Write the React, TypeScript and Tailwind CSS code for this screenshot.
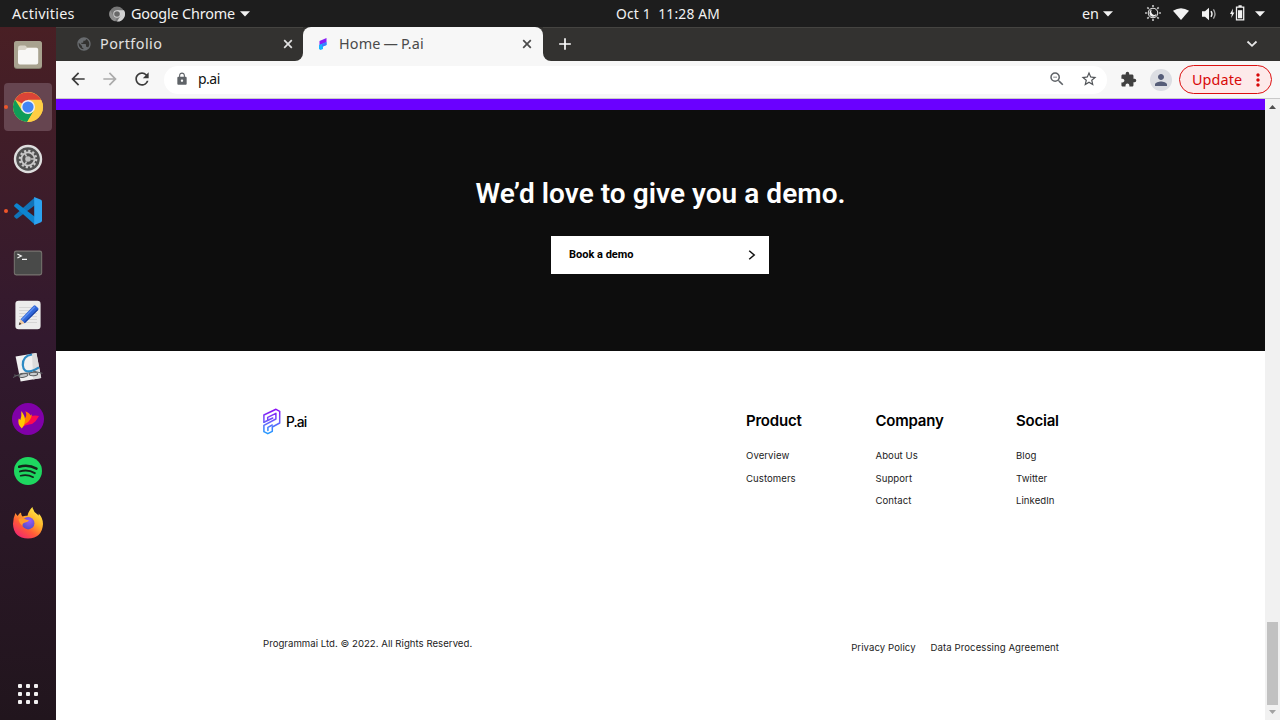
import type { ReactNode } from "react";
import {
  MdArrowBack,
  MdArrowForward,
  MdRefresh,
  MdLock,
  MdZoomOut,
  MdStarBorder,
  MdExtension,
  MdPerson,
  MdMoreVert,
  MdPublic,
  MdAdd,
} from "react-icons/md";

const UI = "font-['Noto_Sans','Open_Sans',sans-serif]";
const SITE = "font-[Inter,'Liberation_Sans',sans-serif]";
const DISPLAY = "font-[Roboto,'Liberation_Sans',sans-serif]";

function Caret({ className = "" }: { className?: string }) {
  return (
    <svg viewBox="0 0 10 6" className={`h-[6px] w-[10px] ${className}`}>
      <path d="M0 0.3h10L5 5.6z" fill="#f2f2f2" />
    </svg>
  );
}

function CloseIcon() {
  return (
    <svg viewBox="0 0 10 10" className="ml-auto h-[10px] w-[10px]">
      <path d="m1.2 1.2 7.6 7.6M8.8 1.2 1.2 8.8" stroke="currentColor" strokeWidth="1.7" />
    </svg>
  );
}

function SystemBar() {
  return (
    <header className={`flex h-[27px] shrink-0 items-center bg-[#1d1d1d] text-[14.4px] leading-none text-[#f2f2f2] ${UI}`}>
      <span className="w-[109px] pl-3 pt-px tracking-[0.28px]">Activities</span>
      <svg viewBox="0 0 16 16" className="h-4 w-4">
        <circle cx="8" cy="8" r="7.6" fill="#777" />
        <path d="M8 4.2h7A7.6 7.6 0 0 1 8 15.6L11.4 10z" fill="#d0d0d0" />
        <path d="M1.2 4.2 4.6 10A3.8 3.8 0 0 0 8 11.8L6 15.3A7.6 7.6 0 0 1 1.2 4.2z" fill="#8d8d8d" />
        <circle cx="8" cy="8" r="3.7" fill="#d5d5d5" />
        <circle cx="8" cy="8" r="2.8" fill="#686868" />
      </svg>
      <span className="w-[115px] whitespace-nowrap pl-[6px] pt-px tracking-[-0.18px]">Google Chrome</span>
      <Caret />
      <span className="w-[480px] whitespace-nowrap pl-[366px] text-[13.8px] tracking-[0.18px]">Oct 1&nbsp; 11:28 AM</span>
      <span className="ml-auto w-[21px] pt-px">en</span>
      <Caret />
      <svg viewBox="0 0 16 16" className="mb-[2px] ml-8 h-4 w-4">
        <path
          d="M8 0v2M8 14v2M0 8h2M14 8h2M2.3 2.3l1.5 1.5M12.2 12.2l1.5 1.5M2.3 13.7l1.5-1.5M12.2 3.8l1.5-1.5"
          stroke="#bcbcbc"
          strokeWidth="1.7"
        />
        <circle cx="8" cy="8" r="4.8" fill="none" stroke="#f2f2f2" strokeWidth="1" />
        <path d="M7.2 4.600A3.600 3.600 0 1 0 11.600 8.800 2.900 2.900 0 0 1 7.200 4.600z" fill="#f2f2f2" />
      </svg>
      <svg viewBox="0 0 16 12" className="ml-3 h-3 w-4">
        <path d="M0 2.8Q8-2.4 16 2.8L8 12z" fill="#f2f2f2" />
      </svg>
      <svg viewBox="0 0 16 14" className="ml-[13px] h-[14px] w-4">
        <path d="M0 4.3h3L7 .8v12.4L3 9.7H0z" fill="#f2f2f2" />
        <path d="M9 4.2q2 2.8 0 5.6" fill="none" stroke="#f2f2f2" strokeWidth="1.4" />
        <path d="M11.4 2.4q3.2 4.6 0 9.2" fill="none" stroke="#a5a5a5" strokeWidth="1.4" />
      </svg>
      <svg viewBox="0 0 15 16" className="mb-[2px] ml-[12px] h-4 w-[15px]">
        <path d="M3 3.5 0 9h1.8L1.2 13l3.2-5.5H2.6z" fill="#f2f2f2" />
        <path d="M6.5 2.2h7.2v12.6H6.5zM8.5 1h3.2" fill="none" stroke="#f2f2f2" strokeWidth="1.3" />
        <path d="M8 5.2h4.2v8.1H8z" fill="#f2f2f2" />
      </svg>
      <Caret className="ml-[10px] mr-[15px]" />
    </header>
  );
}

function FilesIcon() {
  return (
    <svg viewBox="0 0 32 32" className="h-8 w-8">
      <rect x="2" y="2" width="28" height="28" rx="3" fill="#827c6c" />
      <rect x="2" y="2" width="28" height="27" rx="3" fill="#a8a28f" />
      <path d="M6 9q0-2.4 2.4-2.4h4.4q1.6 0 2 1.8h9.4q1.6 0 1.6 1.8V22H6z" fill="#d9d4c8" />
      <path d="M6 12.5q0-1.4 1.5-1.4h4.8q1.5 0 2-1.4.3-.8 1.5-.8h9q1.4 0 1.4 1.6v13q0 2-2 2H8q-2 0-2-2z" fill="#f8f7f5" />
    </svg>
  );
}

function ChromeIcon() {
  return (
    <svg viewBox="0 0 32 32" className="h-8 w-8">
      <circle cx="16" cy="16" r="15" fill="#ffce44" />
      <path d="M16 16 3 8.5A15 15 0 0 1 29 8.8H16z" fill="#db4437" />
      <path d="M3 8.5A15 15 0 0 0 15.2 31L22 19.5 16 16 9.8 19.6z" fill="#0f9d58" />
      <path d="M16 9h13.2A15 15 0 0 1 15.2 31L22 19.5z" fill="#ffce44" />
      <circle cx="16" cy="16" r="7" fill="#f1f1f1" />
      <circle cx="16" cy="16" r="5.6" fill="#4285f4" />
    </svg>
  );
}

function SettingsIcon() {
  return (
    <svg viewBox="0 0 32 32" className="h-8 w-8">
      <circle cx="16" cy="16" r="14.2" fill="#dedede" />
      <circle cx="16" cy="16" r="11.8" fill="#505050" />
      <circle cx="16" cy="16" r="8.2" fill="none" stroke="#c9c9c9" strokeWidth="2.2" strokeDasharray="2.2 2.09" />
      <circle cx="16" cy="16" r="6.6" fill="none" stroke="#c9c9c9" strokeWidth="1.8" />
      <circle cx="16" cy="16" r="2.8" fill="#c0c0c0" />
      <path d="M19 16h4M14.6 13.5l-2-3.4M14.6 18.5l-2 3.4" stroke="#c0c0c0" strokeWidth="1.5" />
    </svg>
  );
}

function CodeIcon() {
  return (
    <svg viewBox="0 0 32 32" className="h-8 w-8">
      <path d="M23 2.2 2.4 20.5q-.7.7 0 1.4l1.6 1.5q.7.5 1.4 0L23.5 9.8z" fill="#1173b8" />
      <path d="M23 29.8 2.4 11.5q-.7-.7 0-1.4L4 8.6q.7-.5 1.4 0L23.5 22.2z" fill="#0d84cf" />
      <path d="M22.2 2 29 4.8q1 .5 1 1.6v19.2q0 1.1-1 1.6L22.2 30z" fill="#2ca2f0" />
    </svg>
  );
}

function TerminalIcon() {
  return (
    <svg viewBox="0 0 32 32" className="h-8 w-8">
      <rect x="1.8" y="3.6" width="28.4" height="24.8" rx="2.4" fill="#77736f" />
      <rect x="2.8" y="4.8" width="26.4" height="22.4" rx="1.6" fill="#494a49" />
      <path d="m5.4 7 3.8 2-3.8 2M10 12.4h5" fill="none" stroke="#f4f4f4" strokeWidth="1.3" />
    </svg>
  );
}

function EditorIcon() {
  return (
    <svg viewBox="0 0 32 32" className="h-8 w-8">
      <rect x="3.4" y="1.8" width="25.2" height="28.4" rx="3.2" fill="#ececec" />
      <path d="M7 8.5h16M7 11.5h16M7 14.5h18M7 17.5h18M7 20.5h18M7 23.5h18" stroke="#d4d4d4" strokeWidth="0.9" />
      <path d="M7 26 8.6 20.2l4.3 4z" fill="#f0c9a0" />
      <path d="m6.8 26 .8-2.7 1.9 1.8z" fill="#333" />
      <path d="m8.6 20.2 13-13.4q1-1 2 0l2.5 2.3q1 1 0 2L12.9 24.2z" fill="#2f66d8" />
      <path d="m9.8 20.9 13-13.1" stroke="#5f90f2" strokeWidth="1.4" />
      <path d="m12.4 23.6 13.3-13" stroke="#1b41a0" strokeWidth="1.2" />
    </svg>
  );
}

function ReaderIcon() {
  return (
    <svg viewBox="0 0 32 32" className="h-8 w-8">
      <path d="m3.6 5.5 20.8-3.6 4.8 25.2-20.6 3.4z" fill="#f1f1f1" />
      <path d="m20 2.7 4.4-.8 4.8 25.2-8 1.3z" fill="#dcdcdc" />
      <path d="M20 3.5Q10.5 5 10.8 14q.6 7.5 7.700 6.200 4.500-1 8.500-3.800" fill="none" stroke="#2d8ac4" strokeWidth="2.2" />
      <g fill="none" stroke="#5a5e60" strokeWidth="1">
        <path d="M1 26.5 9 22.5l15-1M2 24l6 1M21 20l9.5 2.3" />
        <ellipse cx="11.5" cy="24.5" rx="4.5" ry="1.7" transform="rotate(-12 11.5 24.5)" fill="#c3c6c8" />
        <ellipse cx="21.5" cy="23" rx="4.2" ry="1.7" transform="rotate(-4 21.5 23)" fill="#c9cccd" />
      </g>
    </svg>
  );
}

function FlameIcon() {
  return (
    <svg viewBox="0 0 32 32" className="h-8 w-8">
      <circle cx="16" cy="16" r="16" fill="#8000a8" />
      <path d="M10 24.500Q12 16 18.500 13.500q4-1.800 8.500-.5-1.500 2.500-3.500 5.200-2.500 3-6.500 3.200-4 .3-7 3.100z" fill="#ff0a50" />
      <path d="M10 24.500q0-5 2-8 2.500-2.500 2.300-4.500 0-2-1-3.800 4.500 1.800 5.300 4.400 1-.9 1.500-1.600-.5 3-2 5.500-1.700 3-4.500 4.300-2.500 1.200-3.600 3.700z" fill="#ff7b00" />
      <path d="M9.800 25.500Q5 21 6.800 15.500l1.500 1.500q1.500-4 1-9 4 5 3.700 9.500-.1 4.500-3.200 8z" fill="#ffc800" />
    </svg>
  );
}

function SpotifyIcon() {
  return (
    <svg viewBox="0 0 32 32" className="h-8 w-8">
      <circle cx="16" cy="16" r="14" fill="#1ed760" />
      <g fill="none" stroke="#15251b" strokeLinecap="round">
        <path d="M7.2 11.8q9.3-2.6 17.3 1.9" strokeWidth="2.5" />
        <path d="M8 16.4q8-2.2 14.8 1.7" strokeWidth="2" />
        <path d="M8.7 20.7q6.6-1.7 12.5 1.5" strokeWidth="1.7" />
      </g>
    </svg>
  );
}

function FirefoxIcon() {
  return (
    <svg viewBox="0 0 32 32" className="h-8 w-8">
      <defs>
        <linearGradient id="ff-body" x1=".85" y1="0.05" x2=".2" y2=".95">
          <stop offset="0" stopColor="#fff04a" />
          <stop offset=".38" stopColor="#ffb02a" />
          <stop offset=".68" stopColor="#ff5a38" />
          <stop offset="1" stopColor="#f0286e" />
        </linearGradient>
        <radialGradient id="ff-globe" cx=".6" cy=".3" r=".8">
          <stop offset="0" stopColor="#9a5cf8" />
          <stop offset="1" stopColor="#4a4bc0" />
        </radialGradient>
      </defs>
      <path
        d="M3.500 6q1 2 2.200 3Q7 6.500 9 5.600q0 2.400 1.500 3.800 2.500-1 5-.6 .5-3 2-5 1.500-2.600 3-3.800 .5 4.500 5 7.500 .8.500 1.200 1.200V6.500Q31 11 31 17q-.8 14-15 14.500Q1.500 31 1 17q0-6 2.500-11z"
        fill="url(#ff-body)"
      />
      <circle cx="16.2" cy="16.2" r="6.2" fill="url(#ff-globe)" />
      <path d="M6.500 12.500q3-2.500 8 .2l2.600.6q-1 2-4 2.200-3 .8-2.700 3.500-3-2-3.900-6.500z" fill="#ff9a2b" />
    </svg>
  );
}

function DockItem({ children, active = false, running = false }: { children: ReactNode; active?: boolean; running?: boolean }) {
  return (
    <div className={`relative flex h-12 w-12 items-center justify-center rounded-[4px] ${active ? "bg-[#664550]" : ""}`}>
      {running && <span className="absolute left-0 top-[22px] h-1 w-1 rounded-full bg-[#f0562a]" />}
      {children}
    </div>
  );
}

function Dock() {
  return (
    <nav className="flex w-14 shrink-0 flex-col items-center gap-1 bg-linear-to-b from-[#491f24] via-[#32192e] via-45% to-[#21151d] pt-1">
      <DockItem><FilesIcon /></DockItem>
      <DockItem active running><ChromeIcon /></DockItem>
      <DockItem><SettingsIcon /></DockItem>
      <DockItem running><CodeIcon /></DockItem>
      <DockItem><TerminalIcon /></DockItem>
      <DockItem><EditorIcon /></DockItem>
      <DockItem><ReaderIcon /></DockItem>
      <DockItem><FlameIcon /></DockItem>
      <DockItem><SpotifyIcon /></DockItem>
      <DockItem><FirefoxIcon /></DockItem>
      <div className="mb-4 mt-auto grid grid-cols-3 gap-1">
        {Array.from({ length: 9 }, (_, i) => (
          <span key={i} className="h-1 w-1 rounded-[1px] bg-[#f2f0f1]" />
        ))}
      </div>
    </nav>
  );
}

function TabStrip() {
  return (
    <div className={`flex h-[34px] shrink-0 bg-[#f7f7f7] text-[14.4px] leading-none ${UI}`}>
      <div className="flex w-[247px] items-center rounded-br-[8px] border-t border-[#454441] bg-[#333230] pb-px pl-5 pr-[10px] text-[#e2e2e2]">
        <MdPublic className="h-4 w-4 text-[#686b6e]" />
        <span className="ml-2 tracking-[0.45px]">Portfolio</span>
        <CloseIcon />
      </div>
      <div className="flex w-[240px] bg-[#333230]">
        <div className="flex w-full items-center rounded-t-[8px] bg-[#f7f7f7] pl-[15px] pr-[11px] text-[#4a4a4a]">
          <svg viewBox="0 0 10 12" className="h-3 w-[10px]">
            <path d="M1.500 3 8.500 0v4.500L1.500 7.500z" fill="#8a1df5" />
            <path d="M1 7 8.500 4v3L5 8.600V11L2.500 12 1 11z" fill="#16b4ff" />
            <path d="M4 6.300 8.500 4.400V7L4 8.800z" fill="#3d7bff" />
          </svg>
          <span className="ml-[11px] tracking-[0.15px]">
            Home<span className="mx-[-1px]"> — </span>P.ai
          </span>
          <CloseIcon />
        </div>
      </div>
      <div className="flex flex-1 items-center rounded-bl-[8px] border-t border-[#454441] bg-[#333230] pb-px pl-3">
        <MdAdd className="h-5 w-5 text-white" />
        <svg viewBox="0 0 12 8" className="ml-auto mr-[22px] h-2 w-3">
          <path d="m1.5 1.5 4.5 4.3 4.5-4.3" fill="none" stroke="#e8e8e8" strokeWidth="1.8" />
        </svg>
      </div>
    </div>
  );
}

function Toolbar() {
  return (
    <div className={`flex h-[38px] shrink-0 items-center border-b border-[#c9c9c9] bg-[#f7f7f7] pl-3 pr-2 leading-none ${UI}`}>
      <MdArrowBack className="mb-px h-5 w-5 text-[#3c3c3c]" />
      <MdArrowForward className="mb-px ml-3 h-5 w-5 text-[#ababab]" />
      <MdRefresh className="mb-px ml-3 h-5 w-5 text-[#3c3c3c]" />
      <div className="ml-3 flex h-7 w-[943px] items-center rounded-full bg-white pl-[11px] pr-[9px]">
        <MdLock className="mb-[2px] h-[14px] w-[14px] text-[#5f6368]" />
        <span className="mb-[2px] ml-[9px] text-[14px] tracking-[-0.5px] text-[#111]">p.ai</span>
        <MdZoomOut className="mb-px ml-auto h-[18px] w-[18px] text-[#5f6368]" />
        <MdStarBorder className="mb-px ml-[14px] h-[18px] w-[18px] text-[#505357]" />
      </div>
      <MdExtension className="ml-[13px] h-[17px] w-[17px] text-[#404040]" />
      <span className="ml-[13px] flex h-[22px] w-[22px] items-center justify-center rounded-full bg-[#dcdee3]">
        <MdPerson className="h-[18px] w-[18px] text-[#555d78]" />
      </span>
      <span className="ml-auto flex h-[29px] w-[93px] items-center rounded-full border border-[#dc1010] bg-[#fdeaea] pl-3 text-[14.4px] text-[#d80808]">
        <span className="pt-px tracking-[0.1px]">Update</span>
        <MdMoreVert className="ml-auto mr-[3px] h-[20px] w-[20px]" />
      </span>
    </div>
  );
}

const columns = [
  { title: "Product", width: "w-[129.5px]", links: ["Overview", "Customers"] },
  { title: "Company", width: "w-[140.5px]", links: ["About Us", "Support", "Contact"] },
  { title: "Social", width: "w-[60px]", links: ["Blog", "Twitter", "LinkedIn"] },
];

function Logo() {
  return (
    <div className="flex items-center gap-[5px]">
      <svg viewBox="0 0 18 28" className="h-7 w-[18px]">
        <defs>
          <linearGradient id="logo" gradientUnits="userSpaceOnUse" x1="9" y1="2" x2="9" y2="26">
            <stop offset="0" stopColor="#8a0cf5" />
            <stop offset=".5" stopColor="#7058fb" />
            <stop offset="1" stopColor="#2399ff" />
          </linearGradient>
        </defs>
        <g fill="none" stroke="url(#logo)" strokeWidth="1.5" strokeLinejoin="round" strokeLinecap="round">
          <path d="M.9 15.2V8L13 2.3 16.7 4.3V16L9.3 20v4.3L4.8 26.700 .9 24.700V18.300L12.900 12V6.300L4.700 10.300V12.800" />
          <path d="M.9 15.2 9.8 11M4.9 23.5v-3.2l4.400-2.300" />
        </g>
      </svg>
      <span className="pt-[3px] text-[13.8px] font-medium leading-none tracking-[-0.9px] text-black">P.ai</span>
    </div>
  );
}

function Page() {
  return (
    <main className={`flex min-w-0 flex-1 flex-col bg-white ${SITE}`}>
      <div className="h-[11px] shrink-0 bg-[#6a00ff]" />
      <section className={`flex h-[241px] shrink-0 flex-col items-center bg-[#0d0d0d] pt-[65px] ${DISPLAY}`}>
        <h1 className="whitespace-nowrap text-[28px] font-semibold leading-[38px] tracking-[0.04px] text-white">We’d love to give you a demo.</h1>
        <a className="mr-px mt-[23px] flex h-[38px] w-[218px] items-center justify-between bg-white pl-[18px] pr-[13px] text-[11px] font-bold leading-none text-black">
          <span className="pb-px">Book a demo</span>
          <svg viewBox="0 0 8 10" className="h-[10px] w-2">
            <path d="m1.2.8 5 4.2-5 4.2" fill="none" stroke="#111" strokeWidth="1.5" />
          </svg>
        </a>
      </section>
      <footer className="flex flex-1 flex-col pl-[207px] pr-[206px] pt-[56px]">
        <div className="flex h-[228px] items-start justify-between">
          <Logo />
          <div className="flex w-[313px] pt-[3px]">
            {columns.map((c) => (
              <div key={c.title} className={`shrink-0 ${c.width}`}>
                <h2 className="text-[15px] font-semibold leading-[22px] tracking-[-0.22px] text-black">{c.title}</h2>
                <ul className="mt-[13px] text-[9.6px] leading-[22.5px] tracking-[0.05px] text-[#1c1c1c]">
                  {c.links.map((l) => (
                    <li key={l}>{l}</li>
                  ))}
                </ul>
              </div>
            ))}
          </div>
        </div>
        <div className="flex items-start justify-between text-[9.6px] leading-[16px] text-[#1c1c1c]">
          <p className="pt-px tracking-[0.03px]">Programmai Ltd. © 2022. All Rights Reserved.</p>
          <div className="flex gap-[15px] pt-[5px] tracking-[0.07px]">
            <span>Privacy Policy</span>
            <span>Data Processing Agreement</span>
          </div>
        </div>
      </footer>
    </main>
  );
}

function Scrollbar() {
  return (
    <div className="flex w-[15px] shrink-0 flex-col items-center bg-[#f1f1f1]">
      <svg viewBox="0 0 7 4" className="mt-[6px] h-1 w-[7px]">
        <path d="M3.5 0 7 4H0z" fill="#505050" />
      </svg>
      <div className="mt-auto h-[83px] w-[11px] bg-[#c1c1c1]" />
      <svg viewBox="0 0 7 4" className="mb-[6px] mt-[5px] h-1 w-[7px]">
        <path d="M3.5 4 0 0h7z" fill="#a3a3a3" />
      </svg>
    </div>
  );
}

export default function App() {
  return (
    <div className="flex h-[720px] w-[1280px] flex-col overflow-hidden">
      <SystemBar />
      <div className="flex min-h-0 flex-1">
        <Dock />
        <div className="flex min-w-0 flex-1 flex-col">
          <TabStrip />
          <Toolbar />
          <div className="flex min-h-0 flex-1">
            <Page />
            <Scrollbar />
          </div>
        </div>
      </div>
    </div>
  );
}
